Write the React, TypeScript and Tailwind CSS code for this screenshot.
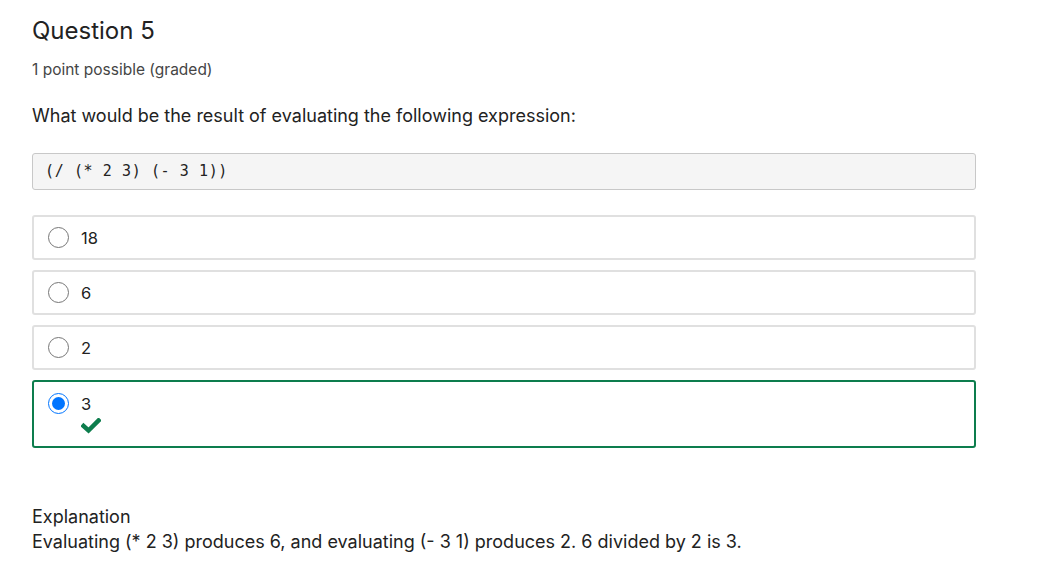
import React from 'react';

const options = ['18', '6', '2', '3'];

const Radio = ({ checked }: { checked: boolean }) =>
  checked ? (
    <span className="w-[21px] h-[21px] rounded-full border-[1.5px] border-[#0075ff] flex items-center justify-center shrink-0">
      <span className="w-[13px] h-[13px] rounded-full bg-[#0075ff]" />
    </span>
  ) : (
    <span className="w-[21px] h-[21px] rounded-full border border-[#767676] bg-white shrink-0" />
  );

const App = () => {
  return (
    <div className="bg-white w-[1037px] h-[580px] text-[#313131] font-['Inter',sans-serif]">
      <div className="pl-[32px] pt-[15px] w-[976px]">
        <h2 className="text-[24px] leading-[32px] text-[#222]">Question 5</h2>
        <div className="mt-[11px] text-[15.5px] leading-[24px] text-[#454545]">1 point possible (graded)</div>
        <p className="mt-[21px] text-[18px] leading-[26px] text-[#222]">
          What would be the result of evaluating the following expression:
        </p>
        <div className="mt-[24px] h-[37px] bg-[#f5f5f5] border border-[#c8c8c8] rounded-[3px] flex items-center px-[12px] text-[15px] tracking-[0.6px] text-[#222] font-['DejaVu_Sans_Mono',monospace] whitespace-pre">
          (/ (* 2 3) (- 3 1))
        </div>
        <div className="mt-[25px] flex flex-col gap-[10px]">
          {options.map((o, i) => {
            const correct = i === 3;
            return (
              <div
                key={o}
                className={
                  correct
                    ? 'border-2 border-[#0d7d4d] rounded-[3px] h-[68px] flex items-start pt-[11px] pl-[14px]'
                    : 'border-2 border-[#e0e0e0] rounded-[3px] h-[45px] flex items-center pl-[14px]'
                }
              >
                <Radio checked={correct} />
                <div className="ml-[12px] text-[16.5px] leading-[22px] text-[#222]">
                  {o}
                  {correct && (
                    <svg width="20" height="16" viewBox="0 0 20 16" className="mt-[3px] block">
                      <path d="M2.5 8 L7.5 12.5 L17.5 2.5" fill="none" stroke="#0d7d4d" strokeWidth="4.5" strokeLinecap="square" />
                    </svg>
                  )}
                </div>
              </div>
            );
          })}
        </div>
        <div className="mt-[56px] text-[18px] leading-[25px] text-[#222]">
          <div>Explanation</div>
          <div>Evaluating (* 2 3) produces 6, and evaluating (- 3 1) produces 2. 6 divided by 2 is 3.</div>
        </div>
      </div>
    </div>
  );
};

export default App;
